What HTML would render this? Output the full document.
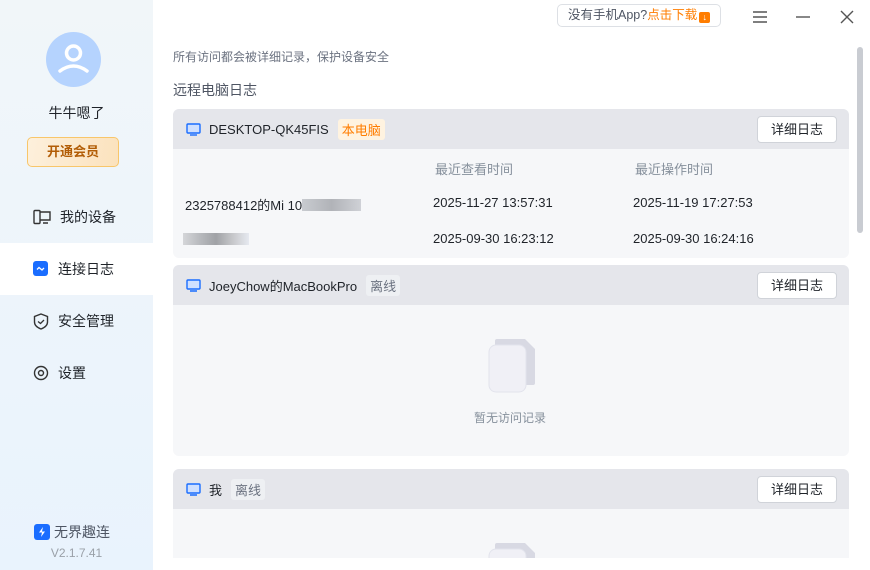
<!DOCTYPE html>
<html><head><meta charset="utf-8"><style>
*{margin:0;padding:0;box-sizing:border-box}
body{width:870px;height:570px;overflow:hidden;background:#fff;font-family:"Liberation Sans","Noto Sans CJK SC",sans-serif;color:#1f2329;position:relative}
.side{position:absolute;left:0;top:0;width:153px;height:570px;background:linear-gradient(#f1f6f9,#e9f3fd)}
.abs{position:absolute}
.nav{position:absolute;left:0;width:153px;height:52px;font-size:14px;display:flex;align-items:center;padding-left:33px}
.nav svg{margin-right:9px}
.card{position:absolute;left:173px;width:676px;border-radius:6px;overflow:hidden;background:#f6f7f9}
.hd{height:40px;background:#e5e6eb;display:flex;align-items:center;padding-left:13px;font-size:13px;position:relative}
.tag{margin-left:9px;padding:1px 4px;border-radius:3px;font-size:13px}
.btn{position:absolute;right:12px;top:7px;width:80px;height:27px;background:#fff;border:1px solid #d0d3d9;border-radius:4px;font-size:13px;text-align:center;line-height:25px}
.t{position:absolute;font-size:13px}
.blur{display:inline-block;height:12px;vertical-align:-1px}
</style></head><body>
<div class="side">
 <div class="abs" style="left:46px;top:32px;width:55px;height:55px;border-radius:50%;background:#b5d3fe">
  <svg width="55" height="55" viewBox="0 0 55 55"><circle cx="27.5" cy="21" r="7" fill="none" stroke="#fff" stroke-width="3.5"/><path d="M14 39 Q27.5 29 41 39" fill="none" stroke="#fff" stroke-width="3.5" stroke-linecap="round"/></svg>
 </div>
 <div class="abs" style="left:0;width:153px;top:103px;text-align:center;font-size:14px">牛牛嗯了</div>
 <div class="abs" style="left:27px;top:137px;width:92px;height:30px;border:1px solid #f8c66a;border-radius:5px;background:linear-gradient(100deg,#fdf0dc,#fbe2bd);text-align:center;line-height:28px;font-size:13px;font-weight:bold;color:#b25d06">开通会员</div>
 <div class="nav" style="top:191px"><svg width="18" height="16"><rect x="1" y="1.5" width="6" height="13" rx="1" fill="none" stroke="#333" stroke-width="1.4"/><path d="M7 3H17V11H7M10 14H15" fill="none" stroke="#333" stroke-width="1.4"/></svg>我的设备</div>
 <div class="nav" style="top:243px;background:#fff"><svg width="16" height="16"><rect width="15" height="15" rx="3" fill="#1a6dff"/><path d="M4 8.5L6 6.5L9 9L11 7" stroke="#fff" stroke-width="1.3" fill="none"/></svg>连接日志</div>
 <div class="nav" style="top:295px"><svg width="16" height="17"><path d="M8 1L14.5 3.5V9Q14.5 13.5 8 16Q1.5 13.5 1.5 9V3.5Z" fill="none" stroke="#333" stroke-width="1.4"/><path d="M5 8.5L7.5 10.5L11 7" stroke="#333" stroke-width="1.3" fill="none"/></svg>安全管理</div>
 <div class="nav" style="top:347px"><svg width="16" height="16"><circle cx="8" cy="8" r="6.5" fill="none" stroke="#333" stroke-width="1.4"/><circle cx="8" cy="8" r="2.5" fill="none" stroke="#333" stroke-width="1.4"/></svg>设置</div>
 <div class="abs" style="left:34px;top:522px;font-size:14px;color:#4e5563;display:flex;align-items:center"><svg width="16" height="16" style="margin-right:4px"><rect width="16" height="16" rx="3" fill="#1a6dff"/><path d="M9 3L5 8.5H8L7 13L11 7.5H8Z" fill="#fff"/></svg>无界趣连</div>
 <div class="abs" style="left:0;width:153px;top:546px;text-align:center;font-size:12px;color:#9aa0a8">V2.1.7.41</div>
</div>
<div class="abs" style="left:557px;top:4px;width:164px;height:23px;border:1px solid #dde0e5;border-radius:5px;font-size:12.5px;line-height:21px;padding-left:10px;color:#4e5563;white-space:nowrap">没有手机App?<span style="color:#ff7d00">点击下载</span><span style="display:inline-block;width:11px;height:11px;background:#ff7d00;border-radius:2px;margin-left:2px;vertical-align:-1px;color:#fff;font-size:9px;line-height:11px;text-align:center">↓</span></div>
<svg class="abs" style="left:752px;top:10px" width="16" height="14"><path d="M1 2H15M1 7H15M1 12H15" stroke="#555" stroke-width="1.4"/></svg>
<svg class="abs" style="left:795px;top:10px" width="16" height="14"><path d="M1 7H15" stroke="#555" stroke-width="1.4"/></svg>
<svg class="abs" style="left:840px;top:10px" width="14" height="14"><path d="M1 1L13 13M13 1L1 13" stroke="#555" stroke-width="1.4"/></svg>
<div class="abs" style="left:857px;top:47px;width:6px;height:186px;border-radius:3px;background:#c9ccd2"></div>
<div class="t" style="left:173px;top:48px;font-size:12px;color:#6b7280">所有访问都会被详细记录，保护设备安全</div>
<div class="t" style="left:173px;top:80px;font-size:14px;color:#4e5563">远程电脑日志</div>

<div class="card" style="top:109px;height:149px">
 <div class="hd"><svg width="15" height="13" style="margin-right:8px"><rect x="1" y="1" width="13" height="9" rx="1" fill="#cfe0ff" stroke="#1a6dff" stroke-width="1.4"/><path d="M4 12H11" stroke="#1a6dff" stroke-width="1.4"/></svg>DESKTOP-QK45FIS<span class="tag" style="background:#fff3e0;color:#ff7d00">本电脑</span><div class="btn">详细日志</div></div>
 <div class="t" style="left:262px;top:50px;color:#86909c">最近查看时间</div>
 <div class="t" style="left:462px;top:50px;color:#86909c">最近操作时间</div>
 <div class="t" style="left:12px;top:86px;white-space:nowrap">2325788412的Mi 10<span class="blur" style="width:59px;background:linear-gradient(90deg,#c8cbd0,#b1b3b8,#cfd1d6)"></span></div>
 <div class="abs" style="left:10px;top:124px;width:66px;height:12px;background:linear-gradient(90deg,#d5d6d9,#b8babe,#a0a2a6,#c6c7ca,#e6e9f0)"></div>
 <div class="t" style="left:260px;top:86px">2025-11-27 13:57:31</div>
 <div class="t" style="left:460px;top:86px">2025-11-19 17:27:53</div>
 <div class="t" style="left:260px;top:122px">2025-09-30 16:23:12</div>
 <div class="t" style="left:460px;top:122px">2025-09-30 16:24:16</div>
</div>

<div class="card" style="top:265px;height:191px">
 <div class="hd"><svg width="15" height="13" style="margin-right:8px"><rect x="1" y="1" width="13" height="9" rx="1" fill="#cfe0ff" stroke="#1a6dff" stroke-width="1.4"/><path d="M4 12H11" stroke="#1a6dff" stroke-width="1.4"/></svg>JoeyChow的MacBookPro<span class="tag" style="background:#eef0f3;color:#6b7280">离线</span><div class="btn">详细日志</div></div>
 <svg class="abs" style="left:314px;top:72px" width="50" height="56"><path d="M10 2H38L48 12V46Q48 48 46 48H10Q8 48 8 46V4Q8 2 10 2Z" fill="#d8d9e3"/><rect x="2" y="8" width="37" height="47" rx="7" fill="#f0f0f6" stroke="#e2e3ec"/></svg>
 <div class="t" style="left:301px;top:144px;font-size:12px;color:#86909c">暂无访问记录</div>
</div>

<div class="card" style="top:469px;height:89px;border-radius:6px 6px 0 0">
 <div class="hd"><svg width="15" height="13" style="margin-right:8px"><rect x="1" y="1" width="13" height="9" rx="1" fill="#cfe0ff" stroke="#1a6dff" stroke-width="1.4"/><path d="M4 12H11" stroke="#1a6dff" stroke-width="1.4"/></svg>我<span class="tag" style="background:#eef0f3;color:#6b7280">离线</span><div class="btn">详细日志</div></div>
 <svg class="abs" style="left:314px;top:72px" width="50" height="56"><path d="M10 2H38L48 12V46Q48 48 46 48H10Q8 48 8 46V4Q8 2 10 2Z" fill="#d8d9e3"/><rect x="2" y="8" width="37" height="47" rx="7" fill="#f0f0f6" stroke="#e2e3ec"/></svg>
</div>
</body></html>
